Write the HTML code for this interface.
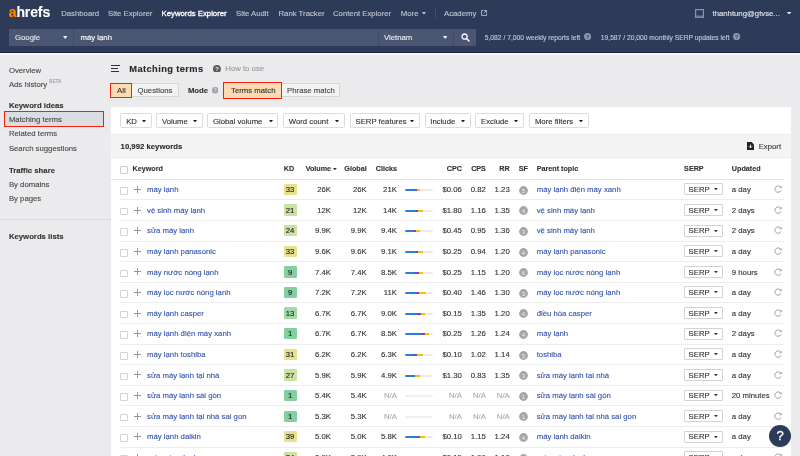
<!DOCTYPE html>
<html><head><meta charset="utf-8"><style>
html,body{margin:0;padding:0;width:800px;height:456px;overflow:hidden;background:#ebebed;font-family:"Liberation Sans",sans-serif}
.t{position:absolute;white-space:nowrap;line-height:1;-webkit-text-stroke:0.12px currentColor}
</style></head><body>
<div id="w" style="position:absolute;left:0;top:0;width:800px;height:456px;will-change:transform">
<div style="position:absolute;left:0.00px;top:0.00px;width:800.00px;height:52.70px;background:#2d3b59"></div>
<div style="position:absolute;left:0.00px;top:52.00px;width:800.00px;height:0.80px;background:#1d263b"></div>
<div style="position:absolute;left:0.00px;top:52.80px;width:800.00px;height:1.80px;background:#f6f6f7"></div>
<div class="t" style="left:8.7px;top:5.35px;font-size:14px;font-weight:bold;color:#fff;letter-spacing:-0.1px"><span style="color:#ff8a00">a</span>hrefs</div>
<div class="t" style="left:61.20px;top:10.00px;font-size:7.75px;color:#bfc5d2;">Dashboard</div>
<div class="t" style="left:108.00px;top:10.00px;font-size:7.75px;color:#bfc5d2;">Site Explorer</div>
<div class="t" style="left:161.60px;top:10.00px;font-size:7.75px;color:#ffffff;-webkit-text-stroke:0.3px #fff;">Keywords Explorer</div>
<div class="t" style="left:236.00px;top:10.00px;font-size:7.75px;color:#bfc5d2;">Site Audit</div>
<div class="t" style="left:278.50px;top:10.00px;font-size:7.75px;color:#bfc5d2;">Rank Tracker</div>
<div class="t" style="left:333.00px;top:10.00px;font-size:7.75px;color:#bfc5d2;">Content Explorer</div>
<div class="t" style="left:400.80px;top:10.00px;font-size:7.75px;color:#bfc5d2;">More</div>
<div class="t" style="left:444.00px;top:10.00px;font-size:7.75px;color:#bfc5d2;">Academy</div>
<svg style="position:absolute;left:422.10px;top:12.30px" width="3.90" height="2.80" viewBox="0 0 3.90 2.80"><path d="M0 0H3.90L1.95 2.80Z" fill="#bfc5d2"/></svg>
<div style="position:absolute;left:435.00px;top:8.20px;width:0.80px;height:10.60px;background:#434d66"></div>
<svg style="position:absolute;left:480.5px;top:9.6px" width="6" height="6" viewBox="0 0 6 6"><path d="M2.6 0.5H0.5V5.5H5.5V3.4" fill="none" stroke="#bfc5d2" stroke-width="0.8"/><path d="M3.2 0.5H5.5V2.8M5.5 0.5L2.6 3.4" fill="none" stroke="#bfc5d2" stroke-width="0.8"/></svg>
<svg style="position:absolute;left:695px;top:8.6px" width="9" height="9.4" viewBox="0 0 9 9.4"><rect x="0.6" y="0.6" width="7.8" height="8.2" fill="none" stroke="#8d96a8" stroke-width="1.2"/><path d="M1.2 7.2H7.8" stroke="#8d96a8" stroke-width="1.1"/></svg>
<div class="t" style="left:712.50px;top:10.00px;font-size:7.75px;color:#e4e7ee;">thanhtung@gtvse...</div>
<svg style="position:absolute;left:787.00px;top:11.60px" width="4.10" height="2.90" viewBox="0 0 4.10 2.90"><path d="M0 0H4.10L2.05 2.90Z" fill="#e4e7ee"/></svg>
<div style="position:absolute;left:9.00px;top:28.70px;width:64.00px;height:16.90px;background:#4a5672"></div>
<div style="position:absolute;left:73.00px;top:28.70px;width:1.00px;height:16.90px;background:#404b66"></div>
<div style="position:absolute;left:74.00px;top:28.70px;width:303.50px;height:16.90px;background:#4a5672"></div>
<div style="position:absolute;left:377.50px;top:28.70px;width:1.00px;height:16.90px;background:#404b66"></div>
<div style="position:absolute;left:378.50px;top:28.70px;width:74.50px;height:16.90px;background:#4a5672"></div>
<div style="position:absolute;left:453.00px;top:28.70px;width:1.00px;height:16.90px;background:#404b66"></div>
<div style="position:absolute;left:454.00px;top:28.70px;width:22.00px;height:16.90px;background:#4a5672"></div>
<div class="t" style="left:15.00px;top:34.00px;font-size:7.75px;color:#e8eaf0;">Google</div>
<svg style="position:absolute;left:63.40px;top:35.90px" width="4.40" height="3.10" viewBox="0 0 4.40 3.10"><path d="M0 0H4.40L2.20 3.10Z" fill="#eef0f4"/></svg>
<div class="t" style="left:80.50px;top:34.00px;font-size:7.75px;color:#ffffff;">máy lạnh</div>
<div class="t" style="left:384.00px;top:34.00px;font-size:7.75px;color:#e8eaf0;">Vietnam</div>
<svg style="position:absolute;left:442.90px;top:35.90px" width="4.40" height="3.10" viewBox="0 0 4.40 3.10"><path d="M0 0H4.40L2.20 3.10Z" fill="#eef0f4"/></svg>
<svg style="position:absolute;left:461px;top:33px" width="9" height="9" viewBox="0 0 9 9"><circle cx="3.6" cy="3.6" r="2.6" fill="none" stroke="#fff" stroke-width="1.3"/><path d="M5.5 5.5L8 8" stroke="#fff" stroke-width="1.5" stroke-linecap="round"/></svg>
<div class="t" style="left:484.70px;top:35.00px;font-size:6.74px;color:#c3c8d4;">5,082 / 7,000 weekly reports left</div>
<div class="t" style="left:600.80px;top:35.00px;font-size:6.72px;color:#c3c8d4;">19,587 / 20,000 monthly SERP updates left</div>
<svg style="position:absolute;left:583.60px;top:33.30px" width="7.20" height="7.20" viewBox="0 0 10 10"><circle cx="5" cy="5" r="5" fill="#8e97aa"/><text x="5" y="8" text-anchor="middle" font-family="Liberation Sans" font-weight="bold" font-size="7.5" fill="#2d3b59">?</text></svg>
<svg style="position:absolute;left:732.60px;top:33.30px" width="7.20" height="7.20" viewBox="0 0 10 10"><circle cx="5" cy="5" r="5" fill="#8e97aa"/><text x="5" y="8" text-anchor="middle" font-family="Liberation Sans" font-weight="bold" font-size="7.5" fill="#2d3b59">?</text></svg>
<div class="t" style="left:8.90px;top:67.00px;font-size:7.75px;color:#484848;">Overview</div>
<div class="t" style="left:8.90px;top:81.00px;font-size:7.75px;color:#484848;">Ads history</div>
<div class="t" style="left:49.30px;top:80.00px;font-size:4.50px;color:#a8a8a8;font-weight:bold;letter-spacing:0.1px;">BETA</div>
<div class="t" style="left:8.90px;top:102.00px;font-size:7.75px;color:#333;font-weight:bold;">Keyword ideas</div>
<div style="position:absolute;left:4.30px;top:111.20px;width:99.40px;height:16.20px;background:#dcdde1;box-sizing:border-box;border:1.5px solid #f2220f"></div>
<div class="t" style="left:8.90px;top:116.00px;font-size:7.75px;color:#484848;">Matching terms</div>
<div class="t" style="left:8.90px;top:130.00px;font-size:7.75px;color:#484848;">Related terms</div>
<div class="t" style="left:8.90px;top:145.00px;font-size:7.75px;color:#484848;">Search suggestions</div>
<div class="t" style="left:8.90px;top:167.00px;font-size:7.75px;color:#333;font-weight:bold;">Traffic share</div>
<div class="t" style="left:8.90px;top:181.00px;font-size:7.75px;color:#484848;">By domains</div>
<div class="t" style="left:8.90px;top:195.00px;font-size:7.75px;color:#484848;">By pages</div>
<div style="position:absolute;left:0.00px;top:219.00px;width:111.00px;height:0.90px;background:#dcdcde"></div>
<div class="t" style="left:8.90px;top:233.00px;font-size:7.75px;color:#333;font-weight:bold;">Keywords lists</div>
<div style="position:absolute;left:111.00px;top:64.90px;width:8.80px;height:1.10px;background:#333"></div>
<div style="position:absolute;left:111.00px;top:67.90px;width:6.80px;height:1.10px;background:#333"></div>
<div style="position:absolute;left:111.00px;top:70.90px;width:7.90px;height:1.10px;background:#333"></div>
<div class="t" style="left:129.30px;top:65.00px;font-size:9.30px;color:#2b2b2b;font-weight:bold;letter-spacing:0.4px;">Matching terms</div>
<svg style="position:absolute;left:212.90px;top:64.60px" width="7.90" height="7.90" viewBox="0 0 10 10"><circle cx="5" cy="5" r="5" fill="#5c5c5c"/><text x="5" y="8" text-anchor="middle" font-family="Liberation Sans" font-weight="bold" font-size="7.5" fill="#eee">?</text></svg>
<div class="t" style="left:225.30px;top:65.00px;font-size:7.75px;color:#9a9a9a;">How to use</div>
<div style="position:absolute;left:110.30px;top:82.60px;width:21.80px;height:15.50px;background:#fcdab2;box-sizing:border-box;border:1.5px solid #f2220f"></div>
<div class="t" style="left:117.00px;top:87.00px;font-size:7.75px;color:#333;">All</div>
<div style="position:absolute;left:132.00px;top:83.40px;width:46.70px;height:14.00px;background:#f3f3f3;box-sizing:border-box;border:0.7px solid #d6d6d6;border-left:none"></div>
<div class="t" style="left:137.50px;top:87.00px;font-size:7.75px;color:#444;">Questions</div>
<div class="t" style="left:187.90px;top:87.00px;font-size:7.75px;color:#333;font-weight:bold;">Mode</div>
<svg style="position:absolute;left:211.75px;top:87.15px" width="6.50" height="6.50" viewBox="0 0 10 10"><circle cx="5" cy="5" r="5" fill="#a3a3a3"/><text x="5" y="8" text-anchor="middle" font-family="Liberation Sans" font-weight="bold" font-size="7.5" fill="#ddd">?</text></svg>
<div style="position:absolute;left:223.20px;top:82.40px;width:58.70px;height:16.20px;background:#fcdab2;box-sizing:border-box;border:1.5px solid #f2220f"></div>
<div class="t" style="left:231.10px;top:87.00px;font-size:7.75px;color:#333;">Terms match</div>
<div style="position:absolute;left:281.90px;top:83.40px;width:58.60px;height:14.00px;background:#f3f3f3;box-sizing:border-box;border:0.7px solid #d6d6d6;border-left:none"></div>
<div class="t" style="left:287.10px;top:87.00px;font-size:7.75px;color:#444;">Phrase match</div>
<div style="position:absolute;left:111.00px;top:107.00px;width:680.00px;height:349.00px;background:#fff"></div>
<div style="position:absolute;left:111.00px;top:134.50px;width:680.00px;height:22.80px;background:#f4f4f4"></div>
<div style="position:absolute;left:111.00px;top:134.00px;width:680.00px;height:0.60px;background:#ececec"></div>
<div style="position:absolute;left:111.00px;top:157.20px;width:680.00px;height:0.60px;background:#ececec"></div>
<div style="position:absolute;left:120.40px;top:113.30px;width:31.20px;height:14.50px;background:#fff;box-sizing:border-box;border:0.7px solid #dcdcdc;border-radius:1.5px"></div>
<div class="t" style="left:126.20px;top:118.00px;font-size:7.75px;color:#333;">KD</div>
<svg style="position:absolute;left:141.60px;top:119.60px" width="4.00" height="2.60" viewBox="0 0 4.00 2.60"><path d="M0 0H4.00L2.00 2.60Z" fill="#222"/></svg>
<div style="position:absolute;left:156.10px;top:113.30px;width:46.50px;height:14.50px;background:#fff;box-sizing:border-box;border:0.7px solid #dcdcdc;border-radius:1.5px"></div>
<div class="t" style="left:161.90px;top:118.00px;font-size:7.75px;color:#333;">Volume</div>
<svg style="position:absolute;left:192.60px;top:119.60px" width="4.00" height="2.60" viewBox="0 0 4.00 2.60"><path d="M0 0H4.00L2.00 2.60Z" fill="#222"/></svg>
<div style="position:absolute;left:207.10px;top:113.30px;width:71.40px;height:14.50px;background:#fff;box-sizing:border-box;border:0.7px solid #dcdcdc;border-radius:1.5px"></div>
<div class="t" style="left:212.90px;top:118.00px;font-size:7.75px;color:#333;">Global volume</div>
<svg style="position:absolute;left:268.50px;top:119.60px" width="4.00" height="2.60" viewBox="0 0 4.00 2.60"><path d="M0 0H4.00L2.00 2.60Z" fill="#222"/></svg>
<div style="position:absolute;left:283.00px;top:113.30px;width:61.50px;height:14.50px;background:#fff;box-sizing:border-box;border:0.7px solid #dcdcdc;border-radius:1.5px"></div>
<div class="t" style="left:288.80px;top:118.00px;font-size:7.75px;color:#333;">Word count</div>
<svg style="position:absolute;left:334.50px;top:119.60px" width="4.00" height="2.60" viewBox="0 0 4.00 2.60"><path d="M0 0H4.00L2.00 2.60Z" fill="#222"/></svg>
<div style="position:absolute;left:349.70px;top:113.30px;width:69.90px;height:14.50px;background:#fff;box-sizing:border-box;border:0.7px solid #dcdcdc;border-radius:1.5px"></div>
<div class="t" style="left:355.50px;top:118.00px;font-size:7.75px;color:#333;">SERP features</div>
<svg style="position:absolute;left:409.60px;top:119.60px" width="4.00" height="2.60" viewBox="0 0 4.00 2.60"><path d="M0 0H4.00L2.00 2.60Z" fill="#222"/></svg>
<div style="position:absolute;left:424.50px;top:113.30px;width:46.10px;height:14.50px;background:#fff;box-sizing:border-box;border:0.7px solid #dcdcdc;border-radius:1.5px"></div>
<div class="t" style="left:430.30px;top:118.00px;font-size:7.75px;color:#333;">Include</div>
<svg style="position:absolute;left:460.60px;top:119.60px" width="4.00" height="2.60" viewBox="0 0 4.00 2.60"><path d="M0 0H4.00L2.00 2.60Z" fill="#222"/></svg>
<div style="position:absolute;left:475.20px;top:113.30px;width:49.10px;height:14.50px;background:#fff;box-sizing:border-box;border:0.7px solid #dcdcdc;border-radius:1.5px"></div>
<div class="t" style="left:481.00px;top:118.00px;font-size:7.75px;color:#333;">Exclude</div>
<svg style="position:absolute;left:514.30px;top:119.60px" width="4.00" height="2.60" viewBox="0 0 4.00 2.60"><path d="M0 0H4.00L2.00 2.60Z" fill="#222"/></svg>
<div style="position:absolute;left:529.10px;top:113.30px;width:60.20px;height:14.50px;background:#fff;box-sizing:border-box;border:0.7px solid #dcdcdc;border-radius:1.5px"></div>
<div class="t" style="left:534.90px;top:118.00px;font-size:7.75px;color:#333;">More filters</div>
<svg style="position:absolute;left:579.30px;top:119.60px" width="4.00" height="2.60" viewBox="0 0 4.00 2.60"><path d="M0 0H4.00L2.00 2.60Z" fill="#222"/></svg>
<div class="t" style="left:120.60px;top:143.00px;font-size:7.75px;color:#2b2b2b;font-weight:bold;">10,992 keywords</div>
<svg style="position:absolute;left:747px;top:141.6px" width="7" height="8.4" viewBox="0 0 7 8.4"><path d="M0 0H4.6L7 2.4V8.4H0Z" fill="#222"/><path d="M3.5 2.6V5.8M2 4.4L3.5 5.9L5 4.4" fill="none" stroke="#fff" stroke-width="0.9"/></svg>
<div class="t" style="left:758.70px;top:143.00px;font-size:7.75px;color:#3a3a3a;">Export</div>
<div style="position:absolute;left:120.00px;top:165.50px;width:8.00px;height:8.00px;background:#fff;box-sizing:border-box;border:0.7px solid #cfcfcf;border-radius:1px"></div>
<div class="t" style="left:132.50px;top:165.00px;font-size:7.20px;color:#333;font-weight:bold;">Keyword</div>
<div class="t" style="left:283.80px;top:165.00px;font-size:7.20px;color:#333;font-weight:bold;">KD</div>
<div class="t" style="left:305.70px;top:165.00px;font-size:7.20px;color:#333;font-weight:bold;">Volume</div>
<svg style="position:absolute;left:333.10px;top:167.90px" width="3.80" height="2.30" viewBox="0 0 3.80 2.30"><path d="M0 0H3.80L1.90 2.30Z" fill="#333"/></svg>
<div class="t" style="right:433.30px;top:165.00px;font-size:7.20px;color:#333;font-weight:bold;">Global</div>
<div class="t" style="right:403.10px;top:165.00px;font-size:7.20px;color:#333;font-weight:bold;">Clicks</div>
<div class="t" style="right:338.10px;top:165.00px;font-size:7.20px;color:#333;font-weight:bold;">CPC</div>
<div class="t" style="right:314.10px;top:165.00px;font-size:7.20px;color:#333;font-weight:bold;">CPS</div>
<div class="t" style="right:290.30px;top:165.00px;font-size:7.20px;color:#333;font-weight:bold;">RR</div>
<div class="t" style="left:518.80px;top:165.00px;font-size:7.20px;color:#333;font-weight:bold;">SF</div>
<div class="t" style="left:536.70px;top:165.00px;font-size:7.20px;color:#333;font-weight:bold;">Parent topic</div>
<div class="t" style="left:684.10px;top:165.00px;font-size:7.20px;color:#333;font-weight:bold;">SERP</div>
<div class="t" style="left:731.80px;top:165.00px;font-size:7.20px;color:#333;font-weight:bold;">Updated</div>
<div style="position:absolute;left:111.00px;top:179.00px;width:673.00px;height:0.70px;background:#e6e6e6"></div>
<div style="position:absolute;left:120.20px;top:187.10px;width:7.60px;height:7.70px;background:#fff;box-sizing:border-box;border:0.7px solid #d3d3d3;border-radius:1px"></div>
<div style="position:absolute;left:133.70px;top:188.90px;width:7.10px;height:0.80px;background:#999"></div>
<div style="position:absolute;left:136.85px;top:185.90px;width:0.80px;height:7.00px;background:#999"></div>
<div class="t" style="left:147.00px;top:186.00px;font-size:7.75px;color:#3655ad;">máy lạnh</div>
<div style="position:absolute;left:283.90px;top:183.80px;width:13.40px;height:11.30px;background:#e6e28c;border-radius:1.2px"></div>
<div class="t" style="left:290.10px;top:186.00px;font-size:7.75px;color:#222;transform:translateX(-50%);">33</div>
<div class="t" style="right:469.00px;top:186.00px;font-size:7.75px;color:#333;">26K</div>
<div class="t" style="right:433.30px;top:186.00px;font-size:7.75px;color:#333;">26K</div>
<div class="t" style="right:403.10px;top:186.00px;font-size:7.75px;color:#333;">21K</div>
<div style="position:absolute;left:405.30px;top:189.10px;width:28.00px;height:2.00px;background:linear-gradient(to right,#2a7fd6 0,#2a7fd6 10.20px,#8b3fb0 10.20px,#8b3fb0 11.70px,#f5c200 11.70px,#f5c200 14.70px,#ebebeb 14.70px);border-radius:1px"></div>
<div class="t" style="right:338.10px;top:186.00px;font-size:7.75px;color:#333;">$0.06</div>
<div class="t" style="right:314.10px;top:186.00px;font-size:7.75px;color:#333;">0.82</div>
<div class="t" style="right:290.30px;top:186.00px;font-size:7.75px;color:#333;">1.23</div>
<svg style="position:absolute;left:518.90px;top:185.70px" width="9" height="9" viewBox="0 0 9 9"><circle cx="4.5" cy="4.5" r="4.4" fill="#a6a6a6"/><text x="4.5" y="6.6" text-anchor="middle" font-family="Liberation Sans" font-size="6" fill="#eeeeee">5</text></svg>
<div class="t" style="left:536.70px;top:186.00px;font-size:7.75px;color:#3655ad;">máy lạnh điện máy xanh</div>
<div style="position:absolute;left:684.40px;top:183.40px;width:38.40px;height:11.90px;background:#fff;box-sizing:border-box;border:0.7px solid #d3d3d3;border-radius:1px"></div>
<div class="t" style="left:688.60px;top:186.00px;font-size:7.75px;color:#333;">SERP</div>
<svg style="position:absolute;left:714.00px;top:188.30px" width="3.80" height="2.30" viewBox="0 0 3.80 2.30"><path d="M0 0H3.80L1.90 2.30Z" fill="#333"/></svg>
<div class="t" style="left:731.80px;top:186.00px;font-size:7.75px;color:#333;">a day</div>
<svg style="position:absolute;left:774.40px;top:185.10px" width="8" height="8" viewBox="0 0 8 8"><path d="M6.9 2.6A3.2 3.2 0 1 0 7.0 5.4" fill="none" stroke="#a0a0a0" stroke-width="1.0"/><path d="M5.6 2.9H7.3V1.0" fill="none" stroke="#a0a0a0" stroke-width="0.9"/></svg>
<div style="position:absolute;left:120.00px;top:199.31px;width:664.00px;height:0.80px;background:#ededed"></div>
<div style="position:absolute;left:120.20px;top:207.71px;width:7.60px;height:7.70px;background:#fff;box-sizing:border-box;border:0.7px solid #d3d3d3;border-radius:1px"></div>
<div style="position:absolute;left:133.70px;top:209.51px;width:7.10px;height:0.80px;background:#999"></div>
<div style="position:absolute;left:136.85px;top:206.51px;width:0.80px;height:7.00px;background:#999"></div>
<div class="t" style="left:147.00px;top:207.00px;font-size:7.75px;color:#3655ad;">vệ sinh máy lạnh</div>
<div style="position:absolute;left:283.90px;top:204.41px;width:13.40px;height:11.30px;background:#cbe1a0;border-radius:1.2px"></div>
<div class="t" style="left:290.10px;top:207.00px;font-size:7.75px;color:#222;transform:translateX(-50%);">21</div>
<div class="t" style="right:469.00px;top:207.00px;font-size:7.75px;color:#333;">12K</div>
<div class="t" style="right:433.30px;top:207.00px;font-size:7.75px;color:#333;">12K</div>
<div class="t" style="right:403.10px;top:207.00px;font-size:7.75px;color:#333;">14K</div>
<div style="position:absolute;left:405.30px;top:209.71px;width:28.00px;height:2.00px;background:linear-gradient(to right,#2a7fd6 0,#2a7fd6 11.10px,#8b3fb0 11.10px,#8b3fb0 13.20px,#f5c200 13.20px,#f5c200 18.40px,#ebebeb 18.40px);border-radius:1px"></div>
<div class="t" style="right:338.10px;top:207.00px;font-size:7.75px;color:#333;">$1.80</div>
<div class="t" style="right:314.10px;top:207.00px;font-size:7.75px;color:#333;">1.16</div>
<div class="t" style="right:290.30px;top:207.00px;font-size:7.75px;color:#333;">1.35</div>
<svg style="position:absolute;left:518.90px;top:206.31px" width="9" height="9" viewBox="0 0 9 9"><circle cx="4.5" cy="4.5" r="4.4" fill="#a6a6a6"/><text x="4.5" y="6.6" text-anchor="middle" font-family="Liberation Sans" font-size="6" fill="#eeeeee">4</text></svg>
<div class="t" style="left:536.70px;top:207.00px;font-size:7.75px;color:#3655ad;">vệ sinh máy lạnh</div>
<div style="position:absolute;left:684.40px;top:204.01px;width:38.40px;height:11.90px;background:#fff;box-sizing:border-box;border:0.7px solid #d3d3d3;border-radius:1px"></div>
<div class="t" style="left:688.60px;top:207.00px;font-size:7.75px;color:#333;">SERP</div>
<svg style="position:absolute;left:714.00px;top:208.91px" width="3.80" height="2.30" viewBox="0 0 3.80 2.30"><path d="M0 0H3.80L1.90 2.30Z" fill="#333"/></svg>
<div class="t" style="left:731.80px;top:207.00px;font-size:7.75px;color:#333;">2 days</div>
<svg style="position:absolute;left:774.40px;top:205.71px" width="8" height="8" viewBox="0 0 8 8"><path d="M6.9 2.6A3.2 3.2 0 1 0 7.0 5.4" fill="none" stroke="#a0a0a0" stroke-width="1.0"/><path d="M5.6 2.9H7.3V1.0" fill="none" stroke="#a0a0a0" stroke-width="0.9"/></svg>
<div style="position:absolute;left:120.00px;top:219.92px;width:664.00px;height:0.80px;background:#ededed"></div>
<div style="position:absolute;left:120.20px;top:228.32px;width:7.60px;height:7.70px;background:#fff;box-sizing:border-box;border:0.7px solid #d3d3d3;border-radius:1px"></div>
<div style="position:absolute;left:133.70px;top:230.12px;width:7.10px;height:0.80px;background:#999"></div>
<div style="position:absolute;left:136.85px;top:227.12px;width:0.80px;height:7.00px;background:#999"></div>
<div class="t" style="left:147.00px;top:227.00px;font-size:7.75px;color:#3655ad;">sửa máy lạnh</div>
<div style="position:absolute;left:283.90px;top:225.02px;width:13.40px;height:11.30px;background:#cbe1a0;border-radius:1.2px"></div>
<div class="t" style="left:290.10px;top:227.00px;font-size:7.75px;color:#222;transform:translateX(-50%);">24</div>
<div class="t" style="right:469.00px;top:227.00px;font-size:7.75px;color:#333;">9.9K</div>
<div class="t" style="right:433.30px;top:227.00px;font-size:7.75px;color:#333;">9.9K</div>
<div class="t" style="right:403.10px;top:227.00px;font-size:7.75px;color:#333;">9.4K</div>
<div style="position:absolute;left:405.30px;top:230.32px;width:28.00px;height:2.00px;background:linear-gradient(to right,#2a7fd6 0,#2a7fd6 9.20px,#8b3fb0 9.20px,#8b3fb0 10.70px,#f5c200 10.70px,#f5c200 15.50px,#ebebeb 15.50px);border-radius:1px"></div>
<div class="t" style="right:338.10px;top:227.00px;font-size:7.75px;color:#333;">$0.45</div>
<div class="t" style="right:314.10px;top:227.00px;font-size:7.75px;color:#333;">0.95</div>
<div class="t" style="right:290.30px;top:227.00px;font-size:7.75px;color:#333;">1.36</div>
<svg style="position:absolute;left:518.90px;top:226.92px" width="9" height="9" viewBox="0 0 9 9"><circle cx="4.5" cy="4.5" r="4.4" fill="#a6a6a6"/><text x="4.5" y="6.6" text-anchor="middle" font-family="Liberation Sans" font-size="6" fill="#eeeeee">3</text></svg>
<div class="t" style="left:536.70px;top:227.00px;font-size:7.75px;color:#3655ad;">vệ sinh máy lạnh</div>
<div style="position:absolute;left:684.40px;top:224.62px;width:38.40px;height:11.90px;background:#fff;box-sizing:border-box;border:0.7px solid #d3d3d3;border-radius:1px"></div>
<div class="t" style="left:688.60px;top:227.00px;font-size:7.75px;color:#333;">SERP</div>
<svg style="position:absolute;left:714.00px;top:229.52px" width="3.80" height="2.30" viewBox="0 0 3.80 2.30"><path d="M0 0H3.80L1.90 2.30Z" fill="#333"/></svg>
<div class="t" style="left:731.80px;top:227.00px;font-size:7.75px;color:#333;">2 days</div>
<svg style="position:absolute;left:774.40px;top:226.32px" width="8" height="8" viewBox="0 0 8 8"><path d="M6.9 2.6A3.2 3.2 0 1 0 7.0 5.4" fill="none" stroke="#a0a0a0" stroke-width="1.0"/><path d="M5.6 2.9H7.3V1.0" fill="none" stroke="#a0a0a0" stroke-width="0.9"/></svg>
<div style="position:absolute;left:120.00px;top:240.53px;width:664.00px;height:0.80px;background:#ededed"></div>
<div style="position:absolute;left:120.20px;top:248.93px;width:7.60px;height:7.70px;background:#fff;box-sizing:border-box;border:0.7px solid #d3d3d3;border-radius:1px"></div>
<div style="position:absolute;left:133.70px;top:250.73px;width:7.10px;height:0.80px;background:#999"></div>
<div style="position:absolute;left:136.85px;top:247.73px;width:0.80px;height:7.00px;background:#999"></div>
<div class="t" style="left:147.00px;top:248.00px;font-size:7.75px;color:#3655ad;">máy lạnh panasonic</div>
<div style="position:absolute;left:283.90px;top:245.63px;width:13.40px;height:11.30px;background:#e6e28c;border-radius:1.2px"></div>
<div class="t" style="left:290.10px;top:248.00px;font-size:7.75px;color:#222;transform:translateX(-50%);">33</div>
<div class="t" style="right:469.00px;top:248.00px;font-size:7.75px;color:#333;">9.6K</div>
<div class="t" style="right:433.30px;top:248.00px;font-size:7.75px;color:#333;">9.6K</div>
<div class="t" style="right:403.10px;top:248.00px;font-size:7.75px;color:#333;">9.1K</div>
<div style="position:absolute;left:405.30px;top:250.93px;width:28.00px;height:2.00px;background:linear-gradient(to right,#2a7fd6 0,#2a7fd6 10.70px,#8b3fb0 10.70px,#8b3fb0 12.90px,#f5c200 12.90px,#f5c200 18.40px,#ebebeb 18.40px);border-radius:1px"></div>
<div class="t" style="right:338.10px;top:248.00px;font-size:7.75px;color:#333;">$0.25</div>
<div class="t" style="right:314.10px;top:248.00px;font-size:7.75px;color:#333;">0.94</div>
<div class="t" style="right:290.30px;top:248.00px;font-size:7.75px;color:#333;">1.20</div>
<svg style="position:absolute;left:518.90px;top:247.53px" width="9" height="9" viewBox="0 0 9 9"><circle cx="4.5" cy="4.5" r="4.4" fill="#a6a6a6"/><text x="4.5" y="6.6" text-anchor="middle" font-family="Liberation Sans" font-size="6" fill="#eeeeee">4</text></svg>
<div class="t" style="left:536.70px;top:248.00px;font-size:7.75px;color:#3655ad;">máy lạnh panasonic</div>
<div style="position:absolute;left:684.40px;top:245.23px;width:38.40px;height:11.90px;background:#fff;box-sizing:border-box;border:0.7px solid #d3d3d3;border-radius:1px"></div>
<div class="t" style="left:688.60px;top:248.00px;font-size:7.75px;color:#333;">SERP</div>
<svg style="position:absolute;left:714.00px;top:250.13px" width="3.80" height="2.30" viewBox="0 0 3.80 2.30"><path d="M0 0H3.80L1.90 2.30Z" fill="#333"/></svg>
<div class="t" style="left:731.80px;top:248.00px;font-size:7.75px;color:#333;">a day</div>
<svg style="position:absolute;left:774.40px;top:246.93px" width="8" height="8" viewBox="0 0 8 8"><path d="M6.9 2.6A3.2 3.2 0 1 0 7.0 5.4" fill="none" stroke="#a0a0a0" stroke-width="1.0"/><path d="M5.6 2.9H7.3V1.0" fill="none" stroke="#a0a0a0" stroke-width="0.9"/></svg>
<div style="position:absolute;left:120.00px;top:261.14px;width:664.00px;height:0.80px;background:#ededed"></div>
<div style="position:absolute;left:120.20px;top:269.54px;width:7.60px;height:7.70px;background:#fff;box-sizing:border-box;border:0.7px solid #d3d3d3;border-radius:1px"></div>
<div style="position:absolute;left:133.70px;top:271.34px;width:7.10px;height:0.80px;background:#999"></div>
<div style="position:absolute;left:136.85px;top:268.34px;width:0.80px;height:7.00px;background:#999"></div>
<div class="t" style="left:147.00px;top:269.00px;font-size:7.75px;color:#3655ad;">máy nước nóng lạnh</div>
<div style="position:absolute;left:283.90px;top:266.24px;width:13.40px;height:11.30px;background:#82cfa0;border-radius:1.2px"></div>
<div class="t" style="left:290.10px;top:269.00px;font-size:7.75px;color:#222;transform:translateX(-50%);">9</div>
<div class="t" style="right:469.00px;top:269.00px;font-size:7.75px;color:#333;">7.4K</div>
<div class="t" style="right:433.30px;top:269.00px;font-size:7.75px;color:#333;">7.4K</div>
<div class="t" style="right:403.10px;top:269.00px;font-size:7.75px;color:#333;">8.5K</div>
<div style="position:absolute;left:405.30px;top:271.54px;width:28.00px;height:2.00px;background:linear-gradient(to right,#2a7fd6 0,#2a7fd6 10.50px,#8b3fb0 10.50px,#8b3fb0 14.20px,#f5c200 14.20px,#f5c200 17.70px,#ebebeb 17.70px);border-radius:1px"></div>
<div class="t" style="right:338.10px;top:269.00px;font-size:7.75px;color:#333;">$0.25</div>
<div class="t" style="right:314.10px;top:269.00px;font-size:7.75px;color:#333;">1.15</div>
<div class="t" style="right:290.30px;top:269.00px;font-size:7.75px;color:#333;">1.20</div>
<svg style="position:absolute;left:518.90px;top:268.14px" width="9" height="9" viewBox="0 0 9 9"><circle cx="4.5" cy="4.5" r="4.4" fill="#a6a6a6"/><text x="4.5" y="6.6" text-anchor="middle" font-family="Liberation Sans" font-size="6" fill="#eeeeee">6</text></svg>
<div class="t" style="left:536.70px;top:269.00px;font-size:7.75px;color:#3655ad;">máy lọc nước nóng lạnh</div>
<div style="position:absolute;left:684.40px;top:265.84px;width:38.40px;height:11.90px;background:#fff;box-sizing:border-box;border:0.7px solid #d3d3d3;border-radius:1px"></div>
<div class="t" style="left:688.60px;top:269.00px;font-size:7.75px;color:#333;">SERP</div>
<svg style="position:absolute;left:714.00px;top:270.74px" width="3.80" height="2.30" viewBox="0 0 3.80 2.30"><path d="M0 0H3.80L1.90 2.30Z" fill="#333"/></svg>
<div class="t" style="left:731.80px;top:269.00px;font-size:7.75px;color:#333;">9 hours</div>
<svg style="position:absolute;left:774.40px;top:267.54px" width="8" height="8" viewBox="0 0 8 8"><path d="M6.9 2.6A3.2 3.2 0 1 0 7.0 5.4" fill="none" stroke="#a0a0a0" stroke-width="1.0"/><path d="M5.6 2.9H7.3V1.0" fill="none" stroke="#a0a0a0" stroke-width="0.9"/></svg>
<div style="position:absolute;left:120.00px;top:281.75px;width:664.00px;height:0.80px;background:#ededed"></div>
<div style="position:absolute;left:120.20px;top:290.15px;width:7.60px;height:7.70px;background:#fff;box-sizing:border-box;border:0.7px solid #d3d3d3;border-radius:1px"></div>
<div style="position:absolute;left:133.70px;top:291.95px;width:7.10px;height:0.80px;background:#999"></div>
<div style="position:absolute;left:136.85px;top:288.95px;width:0.80px;height:7.00px;background:#999"></div>
<div class="t" style="left:147.00px;top:289.00px;font-size:7.75px;color:#3655ad;">máy lọc nước nóng lạnh</div>
<div style="position:absolute;left:283.90px;top:286.85px;width:13.40px;height:11.30px;background:#82cfa0;border-radius:1.2px"></div>
<div class="t" style="left:290.10px;top:289.00px;font-size:7.75px;color:#222;transform:translateX(-50%);">9</div>
<div class="t" style="right:469.00px;top:289.00px;font-size:7.75px;color:#333;">7.2K</div>
<div class="t" style="right:433.30px;top:289.00px;font-size:7.75px;color:#333;">7.2K</div>
<div class="t" style="right:403.10px;top:289.00px;font-size:7.75px;color:#333;">11K</div>
<div style="position:absolute;left:405.30px;top:292.15px;width:28.00px;height:2.00px;background:linear-gradient(to right,#2a7fd6 0,#2a7fd6 10.70px,#8b3fb0 10.70px,#8b3fb0 14.40px,#f5c200 14.40px,#f5c200 21.00px,#ebebeb 21.00px);border-radius:1px"></div>
<div class="t" style="right:338.10px;top:289.00px;font-size:7.75px;color:#333;">$0.40</div>
<div class="t" style="right:314.10px;top:289.00px;font-size:7.75px;color:#333;">1.46</div>
<div class="t" style="right:290.30px;top:289.00px;font-size:7.75px;color:#333;">1.30</div>
<svg style="position:absolute;left:518.90px;top:288.75px" width="9" height="9" viewBox="0 0 9 9"><circle cx="4.5" cy="4.5" r="4.4" fill="#a6a6a6"/><text x="4.5" y="6.6" text-anchor="middle" font-family="Liberation Sans" font-size="6" fill="#eeeeee">3</text></svg>
<div class="t" style="left:536.70px;top:289.00px;font-size:7.75px;color:#3655ad;">máy lọc nước nóng lạnh</div>
<div style="position:absolute;left:684.40px;top:286.45px;width:38.40px;height:11.90px;background:#fff;box-sizing:border-box;border:0.7px solid #d3d3d3;border-radius:1px"></div>
<div class="t" style="left:688.60px;top:289.00px;font-size:7.75px;color:#333;">SERP</div>
<svg style="position:absolute;left:714.00px;top:291.35px" width="3.80" height="2.30" viewBox="0 0 3.80 2.30"><path d="M0 0H3.80L1.90 2.30Z" fill="#333"/></svg>
<div class="t" style="left:731.80px;top:289.00px;font-size:7.75px;color:#333;">a day</div>
<svg style="position:absolute;left:774.40px;top:288.15px" width="8" height="8" viewBox="0 0 8 8"><path d="M6.9 2.6A3.2 3.2 0 1 0 7.0 5.4" fill="none" stroke="#a0a0a0" stroke-width="1.0"/><path d="M5.6 2.9H7.3V1.0" fill="none" stroke="#a0a0a0" stroke-width="0.9"/></svg>
<div style="position:absolute;left:120.00px;top:302.36px;width:664.00px;height:0.80px;background:#ededed"></div>
<div style="position:absolute;left:120.20px;top:310.76px;width:7.60px;height:7.70px;background:#fff;box-sizing:border-box;border:0.7px solid #d3d3d3;border-radius:1px"></div>
<div style="position:absolute;left:133.70px;top:312.56px;width:7.10px;height:0.80px;background:#999"></div>
<div style="position:absolute;left:136.85px;top:309.56px;width:0.80px;height:7.00px;background:#999"></div>
<div class="t" style="left:147.00px;top:310.00px;font-size:7.75px;color:#3655ad;">máy lạnh casper</div>
<div style="position:absolute;left:283.90px;top:307.46px;width:13.40px;height:11.30px;background:#a3d8a8;border-radius:1.2px"></div>
<div class="t" style="left:290.10px;top:310.00px;font-size:7.75px;color:#222;transform:translateX(-50%);">13</div>
<div class="t" style="right:469.00px;top:310.00px;font-size:7.75px;color:#333;">6.7K</div>
<div class="t" style="right:433.30px;top:310.00px;font-size:7.75px;color:#333;">6.7K</div>
<div class="t" style="right:403.10px;top:310.00px;font-size:7.75px;color:#333;">9.0K</div>
<div style="position:absolute;left:405.30px;top:312.76px;width:28.00px;height:2.00px;background:linear-gradient(to right,#2a7fd6 0,#2a7fd6 12.50px,#8b3fb0 12.50px,#8b3fb0 16.40px,#f5c200 16.40px,#f5c200 20.40px,#ebebeb 20.40px);border-radius:1px"></div>
<div class="t" style="right:338.10px;top:310.00px;font-size:7.75px;color:#333;">$0.15</div>
<div class="t" style="right:314.10px;top:310.00px;font-size:7.75px;color:#333;">1.35</div>
<div class="t" style="right:290.30px;top:310.00px;font-size:7.75px;color:#333;">1.20</div>
<svg style="position:absolute;left:518.90px;top:309.36px" width="9" height="9" viewBox="0 0 9 9"><circle cx="4.5" cy="4.5" r="4.4" fill="#a6a6a6"/><text x="4.5" y="6.6" text-anchor="middle" font-family="Liberation Sans" font-size="6" fill="#eeeeee">4</text></svg>
<div class="t" style="left:536.70px;top:310.00px;font-size:7.75px;color:#3655ad;">điều hòa casper</div>
<div style="position:absolute;left:684.40px;top:307.06px;width:38.40px;height:11.90px;background:#fff;box-sizing:border-box;border:0.7px solid #d3d3d3;border-radius:1px"></div>
<div class="t" style="left:688.60px;top:310.00px;font-size:7.75px;color:#333;">SERP</div>
<svg style="position:absolute;left:714.00px;top:311.96px" width="3.80" height="2.30" viewBox="0 0 3.80 2.30"><path d="M0 0H3.80L1.90 2.30Z" fill="#333"/></svg>
<div class="t" style="left:731.80px;top:310.00px;font-size:7.75px;color:#333;">a day</div>
<svg style="position:absolute;left:774.40px;top:308.76px" width="8" height="8" viewBox="0 0 8 8"><path d="M6.9 2.6A3.2 3.2 0 1 0 7.0 5.4" fill="none" stroke="#a0a0a0" stroke-width="1.0"/><path d="M5.6 2.9H7.3V1.0" fill="none" stroke="#a0a0a0" stroke-width="0.9"/></svg>
<div style="position:absolute;left:120.00px;top:322.97px;width:664.00px;height:0.80px;background:#ededed"></div>
<div style="position:absolute;left:120.20px;top:331.37px;width:7.60px;height:7.70px;background:#fff;box-sizing:border-box;border:0.7px solid #d3d3d3;border-radius:1px"></div>
<div style="position:absolute;left:133.70px;top:333.17px;width:7.10px;height:0.80px;background:#999"></div>
<div style="position:absolute;left:136.85px;top:330.17px;width:0.80px;height:7.00px;background:#999"></div>
<div class="t" style="left:147.00px;top:330.00px;font-size:7.75px;color:#3655ad;">máy lạnh điện máy xanh</div>
<div style="position:absolute;left:283.90px;top:328.07px;width:13.40px;height:11.30px;background:#82cfa0;border-radius:1.2px"></div>
<div class="t" style="left:290.10px;top:330.00px;font-size:7.75px;color:#222;transform:translateX(-50%);">1</div>
<div class="t" style="right:469.00px;top:330.00px;font-size:7.75px;color:#333;">6.7K</div>
<div class="t" style="right:433.30px;top:330.00px;font-size:7.75px;color:#333;">6.7K</div>
<div class="t" style="right:403.10px;top:330.00px;font-size:7.75px;color:#333;">8.5K</div>
<div style="position:absolute;left:405.30px;top:333.37px;width:28.00px;height:2.00px;background:linear-gradient(to right,#2a7fd6 0,#2a7fd6 16.40px,#8b3fb0 16.40px,#8b3fb0 20.00px,#f5c200 20.00px,#f5c200 24.30px,#ebebeb 24.30px);border-radius:1px"></div>
<div class="t" style="right:338.10px;top:330.00px;font-size:7.75px;color:#333;">$0.25</div>
<div class="t" style="right:314.10px;top:330.00px;font-size:7.75px;color:#333;">1.26</div>
<div class="t" style="right:290.30px;top:330.00px;font-size:7.75px;color:#333;">1.24</div>
<svg style="position:absolute;left:518.90px;top:329.97px" width="9" height="9" viewBox="0 0 9 9"><circle cx="4.5" cy="4.5" r="4.4" fill="#a6a6a6"/><text x="4.5" y="6.6" text-anchor="middle" font-family="Liberation Sans" font-size="6" fill="#eeeeee">4</text></svg>
<div class="t" style="left:536.70px;top:330.00px;font-size:7.75px;color:#3655ad;">máy lạnh</div>
<div style="position:absolute;left:684.40px;top:327.67px;width:38.40px;height:11.90px;background:#fff;box-sizing:border-box;border:0.7px solid #d3d3d3;border-radius:1px"></div>
<div class="t" style="left:688.60px;top:330.00px;font-size:7.75px;color:#333;">SERP</div>
<svg style="position:absolute;left:714.00px;top:332.57px" width="3.80" height="2.30" viewBox="0 0 3.80 2.30"><path d="M0 0H3.80L1.90 2.30Z" fill="#333"/></svg>
<div class="t" style="left:731.80px;top:330.00px;font-size:7.75px;color:#333;">2 days</div>
<svg style="position:absolute;left:774.40px;top:329.37px" width="8" height="8" viewBox="0 0 8 8"><path d="M6.9 2.6A3.2 3.2 0 1 0 7.0 5.4" fill="none" stroke="#a0a0a0" stroke-width="1.0"/><path d="M5.6 2.9H7.3V1.0" fill="none" stroke="#a0a0a0" stroke-width="0.9"/></svg>
<div style="position:absolute;left:120.00px;top:343.58px;width:664.00px;height:0.80px;background:#ededed"></div>
<div style="position:absolute;left:120.20px;top:351.98px;width:7.60px;height:7.70px;background:#fff;box-sizing:border-box;border:0.7px solid #d3d3d3;border-radius:1px"></div>
<div style="position:absolute;left:133.70px;top:353.78px;width:7.10px;height:0.80px;background:#999"></div>
<div style="position:absolute;left:136.85px;top:350.78px;width:0.80px;height:7.00px;background:#999"></div>
<div class="t" style="left:147.00px;top:351.00px;font-size:7.75px;color:#3655ad;">máy lạnh toshiba</div>
<div style="position:absolute;left:283.90px;top:348.68px;width:13.40px;height:11.30px;background:#e6e28c;border-radius:1.2px"></div>
<div class="t" style="left:290.10px;top:351.00px;font-size:7.75px;color:#222;transform:translateX(-50%);">31</div>
<div class="t" style="right:469.00px;top:351.00px;font-size:7.75px;color:#333;">6.2K</div>
<div class="t" style="right:433.30px;top:351.00px;font-size:7.75px;color:#333;">6.2K</div>
<div class="t" style="right:403.10px;top:351.00px;font-size:7.75px;color:#333;">6.3K</div>
<div style="position:absolute;left:405.30px;top:353.98px;width:28.00px;height:2.00px;background:linear-gradient(to right,#2a7fd6 0,#2a7fd6 8.50px,#8b3fb0 8.50px,#8b3fb0 11.80px,#f5c200 11.80px,#f5c200 18.10px,#ebebeb 18.10px);border-radius:1px"></div>
<div class="t" style="right:338.10px;top:351.00px;font-size:7.75px;color:#333;">$0.10</div>
<div class="t" style="right:314.10px;top:351.00px;font-size:7.75px;color:#333;">1.02</div>
<div class="t" style="right:290.30px;top:351.00px;font-size:7.75px;color:#333;">1.14</div>
<svg style="position:absolute;left:518.90px;top:350.58px" width="9" height="9" viewBox="0 0 9 9"><circle cx="4.5" cy="4.5" r="4.4" fill="#a6a6a6"/><text x="4.5" y="6.6" text-anchor="middle" font-family="Liberation Sans" font-size="6" fill="#eeeeee">5</text></svg>
<div class="t" style="left:536.70px;top:351.00px;font-size:7.75px;color:#3655ad;">toshiba</div>
<div style="position:absolute;left:684.40px;top:348.28px;width:38.40px;height:11.90px;background:#fff;box-sizing:border-box;border:0.7px solid #d3d3d3;border-radius:1px"></div>
<div class="t" style="left:688.60px;top:351.00px;font-size:7.75px;color:#333;">SERP</div>
<svg style="position:absolute;left:714.00px;top:353.18px" width="3.80" height="2.30" viewBox="0 0 3.80 2.30"><path d="M0 0H3.80L1.90 2.30Z" fill="#333"/></svg>
<div class="t" style="left:731.80px;top:351.00px;font-size:7.75px;color:#333;">a day</div>
<svg style="position:absolute;left:774.40px;top:349.98px" width="8" height="8" viewBox="0 0 8 8"><path d="M6.9 2.6A3.2 3.2 0 1 0 7.0 5.4" fill="none" stroke="#a0a0a0" stroke-width="1.0"/><path d="M5.6 2.9H7.3V1.0" fill="none" stroke="#a0a0a0" stroke-width="0.9"/></svg>
<div style="position:absolute;left:120.00px;top:364.19px;width:664.00px;height:0.80px;background:#ededed"></div>
<div style="position:absolute;left:120.20px;top:372.59px;width:7.60px;height:7.70px;background:#fff;box-sizing:border-box;border:0.7px solid #d3d3d3;border-radius:1px"></div>
<div style="position:absolute;left:133.70px;top:374.39px;width:7.10px;height:0.80px;background:#999"></div>
<div style="position:absolute;left:136.85px;top:371.39px;width:0.80px;height:7.00px;background:#999"></div>
<div class="t" style="left:147.00px;top:372.00px;font-size:7.75px;color:#3655ad;">sửa máy lạnh tại nhà</div>
<div style="position:absolute;left:283.90px;top:369.29px;width:13.40px;height:11.30px;background:#cbe1a0;border-radius:1.2px"></div>
<div class="t" style="left:290.10px;top:372.00px;font-size:7.75px;color:#222;transform:translateX(-50%);">27</div>
<div class="t" style="right:469.00px;top:372.00px;font-size:7.75px;color:#333;">5.9K</div>
<div class="t" style="right:433.30px;top:372.00px;font-size:7.75px;color:#333;">5.9K</div>
<div class="t" style="right:403.10px;top:372.00px;font-size:7.75px;color:#333;">4.9K</div>
<div style="position:absolute;left:405.30px;top:374.59px;width:28.00px;height:2.00px;background:linear-gradient(to right,#2a7fd6 0,#2a7fd6 10.50px,#8b3fb0 10.50px,#8b3fb0 10.50px,#f5c200 10.50px,#f5c200 15.30px,#ebebeb 15.30px);border-radius:1px"></div>
<div class="t" style="right:338.10px;top:372.00px;font-size:7.75px;color:#333;">$1.30</div>
<div class="t" style="right:314.10px;top:372.00px;font-size:7.75px;color:#333;">0.83</div>
<div class="t" style="right:290.30px;top:372.00px;font-size:7.75px;color:#333;">1.35</div>
<svg style="position:absolute;left:518.90px;top:371.19px" width="9" height="9" viewBox="0 0 9 9"><circle cx="4.5" cy="4.5" r="4.4" fill="#a6a6a6"/><text x="4.5" y="6.6" text-anchor="middle" font-family="Liberation Sans" font-size="6" fill="#eeeeee">3</text></svg>
<div class="t" style="left:536.70px;top:372.00px;font-size:7.75px;color:#3655ad;">sửa máy lạnh tại nhà</div>
<div style="position:absolute;left:684.40px;top:368.89px;width:38.40px;height:11.90px;background:#fff;box-sizing:border-box;border:0.7px solid #d3d3d3;border-radius:1px"></div>
<div class="t" style="left:688.60px;top:372.00px;font-size:7.75px;color:#333;">SERP</div>
<svg style="position:absolute;left:714.00px;top:373.79px" width="3.80" height="2.30" viewBox="0 0 3.80 2.30"><path d="M0 0H3.80L1.90 2.30Z" fill="#333"/></svg>
<div class="t" style="left:731.80px;top:372.00px;font-size:7.75px;color:#333;">a day</div>
<svg style="position:absolute;left:774.40px;top:370.59px" width="8" height="8" viewBox="0 0 8 8"><path d="M6.9 2.6A3.2 3.2 0 1 0 7.0 5.4" fill="none" stroke="#a0a0a0" stroke-width="1.0"/><path d="M5.6 2.9H7.3V1.0" fill="none" stroke="#a0a0a0" stroke-width="0.9"/></svg>
<div style="position:absolute;left:120.00px;top:384.80px;width:664.00px;height:0.80px;background:#ededed"></div>
<div style="position:absolute;left:120.20px;top:393.20px;width:7.60px;height:7.70px;background:#fff;box-sizing:border-box;border:0.7px solid #d3d3d3;border-radius:1px"></div>
<div style="position:absolute;left:133.70px;top:395.00px;width:7.10px;height:0.80px;background:#999"></div>
<div style="position:absolute;left:136.85px;top:392.00px;width:0.80px;height:7.00px;background:#999"></div>
<div class="t" style="left:147.00px;top:392.00px;font-size:7.75px;color:#3655ad;">sửa máy lạnh sài gòn</div>
<div style="position:absolute;left:283.90px;top:389.90px;width:13.40px;height:11.30px;background:#82cfa0;border-radius:1.2px"></div>
<div class="t" style="left:290.10px;top:392.00px;font-size:7.75px;color:#222;transform:translateX(-50%);">1</div>
<div class="t" style="right:469.00px;top:392.00px;font-size:7.75px;color:#333;">5.4K</div>
<div class="t" style="right:433.30px;top:392.00px;font-size:7.75px;color:#333;">5.4K</div>
<div class="t" style="right:403.10px;top:392.00px;font-size:7.75px;color:#aaa;">N/A</div>
<div style="position:absolute;left:405.30px;top:395.20px;width:28.00px;height:2.00px;background:#f0f0f0;border-radius:1px"></div>
<div class="t" style="right:338.10px;top:392.00px;font-size:7.75px;color:#aaa;">N/A</div>
<div class="t" style="right:314.10px;top:392.00px;font-size:7.75px;color:#aaa;">N/A</div>
<div class="t" style="right:290.30px;top:392.00px;font-size:7.75px;color:#aaa;">N/A</div>
<svg style="position:absolute;left:518.90px;top:391.80px" width="9" height="9" viewBox="0 0 9 9"><circle cx="4.5" cy="4.5" r="4.4" fill="#a6a6a6"/><text x="4.5" y="6.6" text-anchor="middle" font-family="Liberation Sans" font-size="6" fill="#eeeeee">1</text></svg>
<div class="t" style="left:536.70px;top:392.00px;font-size:7.75px;color:#3655ad;">sửa máy lạnh sài gòn</div>
<div style="position:absolute;left:684.40px;top:389.50px;width:38.40px;height:11.90px;background:#fff;box-sizing:border-box;border:0.7px solid #d3d3d3;border-radius:1px"></div>
<div class="t" style="left:688.60px;top:392.00px;font-size:7.75px;color:#333;">SERP</div>
<svg style="position:absolute;left:714.00px;top:394.40px" width="3.80" height="2.30" viewBox="0 0 3.80 2.30"><path d="M0 0H3.80L1.90 2.30Z" fill="#333"/></svg>
<div class="t" style="left:731.80px;top:392.00px;font-size:7.75px;color:#333;">20 minutes</div>
<svg style="position:absolute;left:774.40px;top:391.20px" width="8" height="8" viewBox="0 0 8 8"><path d="M6.9 2.6A3.2 3.2 0 1 0 7.0 5.4" fill="none" stroke="#a0a0a0" stroke-width="1.0"/><path d="M5.6 2.9H7.3V1.0" fill="none" stroke="#a0a0a0" stroke-width="0.9"/></svg>
<div style="position:absolute;left:120.00px;top:405.41px;width:664.00px;height:0.80px;background:#ededed"></div>
<div style="position:absolute;left:120.20px;top:413.81px;width:7.60px;height:7.70px;background:#fff;box-sizing:border-box;border:0.7px solid #d3d3d3;border-radius:1px"></div>
<div style="position:absolute;left:133.70px;top:415.61px;width:7.10px;height:0.80px;background:#999"></div>
<div style="position:absolute;left:136.85px;top:412.61px;width:0.80px;height:7.00px;background:#999"></div>
<div class="t" style="left:147.00px;top:413.00px;font-size:7.75px;color:#3655ad;">sửa máy lạnh tại nhà sai gon</div>
<div style="position:absolute;left:283.90px;top:410.51px;width:13.40px;height:11.30px;background:#82cfa0;border-radius:1.2px"></div>
<div class="t" style="left:290.10px;top:413.00px;font-size:7.75px;color:#222;transform:translateX(-50%);">1</div>
<div class="t" style="right:469.00px;top:413.00px;font-size:7.75px;color:#333;">5.3K</div>
<div class="t" style="right:433.30px;top:413.00px;font-size:7.75px;color:#333;">5.3K</div>
<div class="t" style="right:403.10px;top:413.00px;font-size:7.75px;color:#aaa;">N/A</div>
<div style="position:absolute;left:405.30px;top:415.81px;width:28.00px;height:2.00px;background:#f0f0f0;border-radius:1px"></div>
<div class="t" style="right:338.10px;top:413.00px;font-size:7.75px;color:#aaa;">N/A</div>
<div class="t" style="right:314.10px;top:413.00px;font-size:7.75px;color:#aaa;">N/A</div>
<div class="t" style="right:290.30px;top:413.00px;font-size:7.75px;color:#aaa;">N/A</div>
<svg style="position:absolute;left:518.90px;top:412.41px" width="9" height="9" viewBox="0 0 9 9"><circle cx="4.5" cy="4.5" r="4.4" fill="#a6a6a6"/><text x="4.5" y="6.6" text-anchor="middle" font-family="Liberation Sans" font-size="6" fill="#eeeeee">1</text></svg>
<div class="t" style="left:536.70px;top:413.00px;font-size:7.75px;color:#3655ad;">sửa máy lạnh tại nhà sai gon</div>
<div style="position:absolute;left:684.40px;top:410.11px;width:38.40px;height:11.90px;background:#fff;box-sizing:border-box;border:0.7px solid #d3d3d3;border-radius:1px"></div>
<div class="t" style="left:688.60px;top:413.00px;font-size:7.75px;color:#333;">SERP</div>
<svg style="position:absolute;left:714.00px;top:415.01px" width="3.80" height="2.30" viewBox="0 0 3.80 2.30"><path d="M0 0H3.80L1.90 2.30Z" fill="#333"/></svg>
<div class="t" style="left:731.80px;top:413.00px;font-size:7.75px;color:#333;">a day</div>
<svg style="position:absolute;left:774.40px;top:411.81px" width="8" height="8" viewBox="0 0 8 8"><path d="M6.9 2.6A3.2 3.2 0 1 0 7.0 5.4" fill="none" stroke="#a0a0a0" stroke-width="1.0"/><path d="M5.6 2.9H7.3V1.0" fill="none" stroke="#a0a0a0" stroke-width="0.9"/></svg>
<div style="position:absolute;left:120.00px;top:426.02px;width:664.00px;height:0.80px;background:#ededed"></div>
<div style="position:absolute;left:120.20px;top:434.42px;width:7.60px;height:7.70px;background:#fff;box-sizing:border-box;border:0.7px solid #d3d3d3;border-radius:1px"></div>
<div style="position:absolute;left:133.70px;top:436.22px;width:7.10px;height:0.80px;background:#999"></div>
<div style="position:absolute;left:136.85px;top:433.22px;width:0.80px;height:7.00px;background:#999"></div>
<div class="t" style="left:147.00px;top:433.00px;font-size:7.75px;color:#3655ad;">máy lạnh daikin</div>
<div style="position:absolute;left:283.90px;top:431.12px;width:13.40px;height:11.30px;background:#e6e28c;border-radius:1.2px"></div>
<div class="t" style="left:290.10px;top:433.00px;font-size:7.75px;color:#222;transform:translateX(-50%);">39</div>
<div class="t" style="right:469.00px;top:433.00px;font-size:7.75px;color:#333;">5.0K</div>
<div class="t" style="right:433.30px;top:433.00px;font-size:7.75px;color:#333;">5.0K</div>
<div class="t" style="right:403.10px;top:433.00px;font-size:7.75px;color:#333;">5.8K</div>
<div style="position:absolute;left:405.30px;top:436.42px;width:28.00px;height:2.00px;background:linear-gradient(to right,#2a7fd6 0,#2a7fd6 12.60px,#8b3fb0 12.60px,#8b3fb0 14.70px,#f5c200 14.70px,#f5c200 20.00px,#ebebeb 20.00px);border-radius:1px"></div>
<div class="t" style="right:338.10px;top:433.00px;font-size:7.75px;color:#333;">$0.10</div>
<div class="t" style="right:314.10px;top:433.00px;font-size:7.75px;color:#333;">1.15</div>
<div class="t" style="right:290.30px;top:433.00px;font-size:7.75px;color:#333;">1.24</div>
<svg style="position:absolute;left:518.90px;top:433.02px" width="9" height="9" viewBox="0 0 9 9"><circle cx="4.5" cy="4.5" r="4.4" fill="#a6a6a6"/><text x="4.5" y="6.6" text-anchor="middle" font-family="Liberation Sans" font-size="6" fill="#eeeeee">4</text></svg>
<div class="t" style="left:536.70px;top:433.00px;font-size:7.75px;color:#3655ad;">máy lạnh daikin</div>
<div style="position:absolute;left:684.40px;top:430.72px;width:38.40px;height:11.90px;background:#fff;box-sizing:border-box;border:0.7px solid #d3d3d3;border-radius:1px"></div>
<div class="t" style="left:688.60px;top:433.00px;font-size:7.75px;color:#333;">SERP</div>
<svg style="position:absolute;left:714.00px;top:435.62px" width="3.80" height="2.30" viewBox="0 0 3.80 2.30"><path d="M0 0H3.80L1.90 2.30Z" fill="#333"/></svg>
<div class="t" style="left:731.80px;top:433.00px;font-size:7.75px;color:#333;">a day</div>
<svg style="position:absolute;left:774.40px;top:432.42px" width="8" height="8" viewBox="0 0 8 8"><path d="M6.9 2.6A3.2 3.2 0 1 0 7.0 5.4" fill="none" stroke="#a0a0a0" stroke-width="1.0"/><path d="M5.6 2.9H7.3V1.0" fill="none" stroke="#a0a0a0" stroke-width="0.9"/></svg>
<div style="position:absolute;left:120.00px;top:446.63px;width:664.00px;height:0.80px;background:#ededed"></div>
<div style="position:absolute;left:120.20px;top:455.03px;width:7.60px;height:7.70px;background:#fff;box-sizing:border-box;border:0.7px solid #d3d3d3;border-radius:1px"></div>
<div style="position:absolute;left:133.70px;top:456.83px;width:7.10px;height:0.80px;background:#999"></div>
<div style="position:absolute;left:136.85px;top:453.83px;width:0.80px;height:7.00px;background:#999"></div>
<div class="t" style="left:147.00px;top:454.00px;font-size:7.75px;color:#3655ad;">máy nóng lạnh</div>
<div style="position:absolute;left:283.90px;top:451.73px;width:13.40px;height:11.30px;background:#cbe1a0;border-radius:1.2px"></div>
<div class="t" style="left:290.10px;top:454.00px;font-size:7.75px;color:#222;transform:translateX(-50%);">24</div>
<div class="t" style="right:469.00px;top:454.00px;font-size:7.75px;color:#333;">3.9K</div>
<div class="t" style="right:433.30px;top:454.00px;font-size:7.75px;color:#333;">3.9K</div>
<div class="t" style="right:403.10px;top:454.00px;font-size:7.75px;color:#333;">4.0K</div>
<div style="position:absolute;left:405.30px;top:457.03px;width:28.00px;height:2.00px;background:linear-gradient(to right,#2a7fd6 0,#2a7fd6 10.00px,#8b3fb0 10.00px,#8b3fb0 12.00px,#f5c200 12.00px,#f5c200 16.50px,#ebebeb 16.50px);border-radius:1px"></div>
<div class="t" style="right:338.10px;top:454.00px;font-size:7.75px;color:#333;">$0.15</div>
<div class="t" style="right:314.10px;top:454.00px;font-size:7.75px;color:#333;">1.06</div>
<div class="t" style="right:290.30px;top:454.00px;font-size:7.75px;color:#333;">1.10</div>
<svg style="position:absolute;left:518.90px;top:453.63px" width="9" height="9" viewBox="0 0 9 9"><circle cx="4.5" cy="4.5" r="4.4" fill="#a6a6a6"/><text x="4.5" y="6.6" text-anchor="middle" font-family="Liberation Sans" font-size="6" fill="#eeeeee">4</text></svg>
<div class="t" style="left:536.70px;top:454.00px;font-size:7.75px;color:#3655ad;">máy nóng lạnh</div>
<div style="position:absolute;left:684.40px;top:451.33px;width:38.40px;height:11.90px;background:#fff;box-sizing:border-box;border:0.7px solid #d3d3d3;border-radius:1px"></div>
<div class="t" style="left:688.60px;top:454.00px;font-size:7.75px;color:#333;">SERP</div>
<svg style="position:absolute;left:714.00px;top:456.23px" width="3.80" height="2.30" viewBox="0 0 3.80 2.30"><path d="M0 0H3.80L1.90 2.30Z" fill="#333"/></svg>
<div class="t" style="left:731.80px;top:454.00px;font-size:7.75px;color:#333;">a day</div>
<svg style="position:absolute;left:774.40px;top:453.03px" width="8" height="8" viewBox="0 0 8 8"><path d="M6.9 2.6A3.2 3.2 0 1 0 7.0 5.4" fill="none" stroke="#a0a0a0" stroke-width="1.0"/><path d="M5.6 2.9H7.3V1.0" fill="none" stroke="#a0a0a0" stroke-width="0.9"/></svg>
<div style="position:absolute;left:120.00px;top:467.24px;width:664.00px;height:0.80px;background:#ededed"></div>
<div style="position:absolute;left:769px;top:425px;width:22px;height:22px;border-radius:50%;background:#2c3b5a"></div>
<div class="t" style="left:780.20px;top:429.00px;font-size:13.00px;color:#fff;transform:translateX(-50%);-webkit-text-stroke:0.3px #fff;">?</div>
</div></body></html>
